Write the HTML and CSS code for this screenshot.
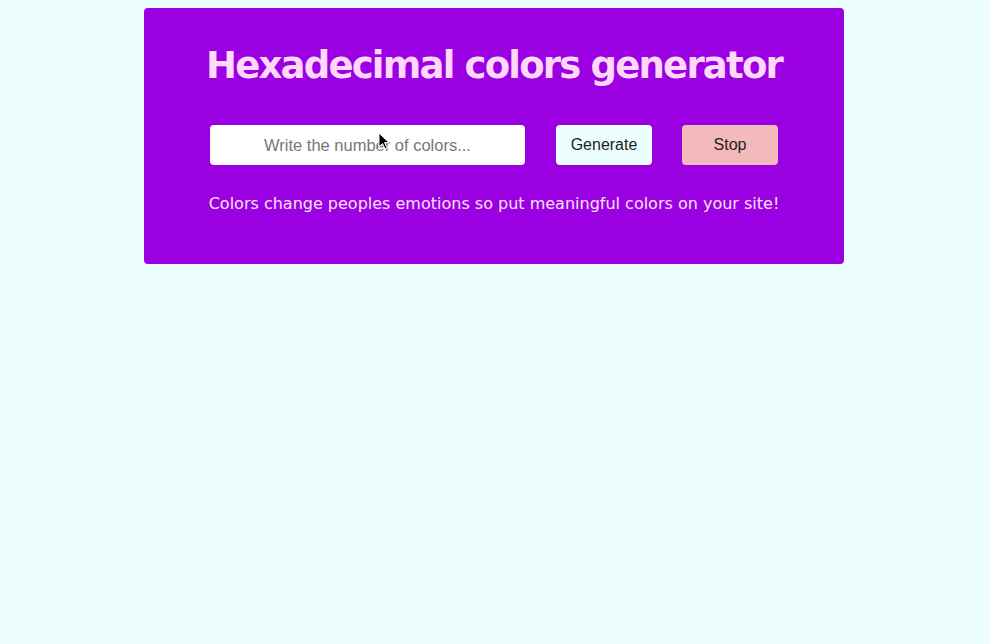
FILE: index.html
```html
<!DOCTYPE html>
<html lang="en">
<head>
<meta charset="utf-8">
<title>Hexadecimal colors generator</title>
<link rel="stylesheet" href="styles.css">
</head>
<body>
<main class="card">
  <h1 class="title">Hexadecimal colors generator</h1>
  <div class="controls">
    <input class="count" type="text" placeholder="Write the number of colors...">
    <button class="btn btn-generate">Generate</button>
    <button class="btn btn-stop">Stop</button>
  </div>
  <p class="note">Colors change peoples emotions so put meaningful colors on your site!</p>
  <svg class="cursor" width="12" height="18" viewBox="0 0 12 18"><path d="M1 1 L1 15 L4.5 11.5 L7 17 L9 16 L6.6 10.6 L11 10.6 Z" fill="#000" stroke="#fff" stroke-width="1"/></svg>
</main>
</body>
</html>
```
FILE: styles.css
```css
html, body { margin: 0; padding: 0; }
body {
  background: #ecfffe;
  padding-top: 8px;
  padding-right: 1px;
  font-family: "DejaVu Sans", sans-serif;
}
.card {
  position: relative;
  width: 700px;
  height: 256px;
  box-sizing: border-box;
  margin: 0 auto;
  background: #9b00e3;
  border-radius: 4px;
  padding-top: 36px;
  text-align: center;
}
.title {
  margin: 0;
  font-family: "DejaVu Sans", sans-serif;
  font-weight: bold;
  font-size: 37px;
  letter-spacing: -1.8px;
  line-height: 44px;
  color: #ffd8fb;
}
.controls {
  display: flex;
  justify-content: center;
  gap: 31px;
  margin-top: 37px;
}
.count {
  width: 315px;
  height: 40px;
  box-sizing: border-box;
  border: none;
  border-radius: 4px;
  background: #fff;
  text-align: center;
  font-family: "Liberation Sans", Arial, sans-serif;
  font-size: 16.5px;
  outline: none;
}
.count::placeholder { color: #777; }
.btn {
  width: 96px;
  height: 40px;
  border: none;
  border-radius: 4px;
  font-family: "Liberation Sans", Arial, sans-serif;
  font-size: 16px;
  color: #222;
}
.btn-generate { background: #ecfffe; }
.btn-stop { background: #f4b9bb; }
.controls .btn-stop { margin-left: -1px; }
.note {
  margin: 29px 0 0;
  font-family: "DejaVu Sans", sans-serif;
  font-size: 16px;
  color: #fde0fb;
}
.cursor {
  position: absolute;
  left: 234px;
  top: 124px;
}
```
